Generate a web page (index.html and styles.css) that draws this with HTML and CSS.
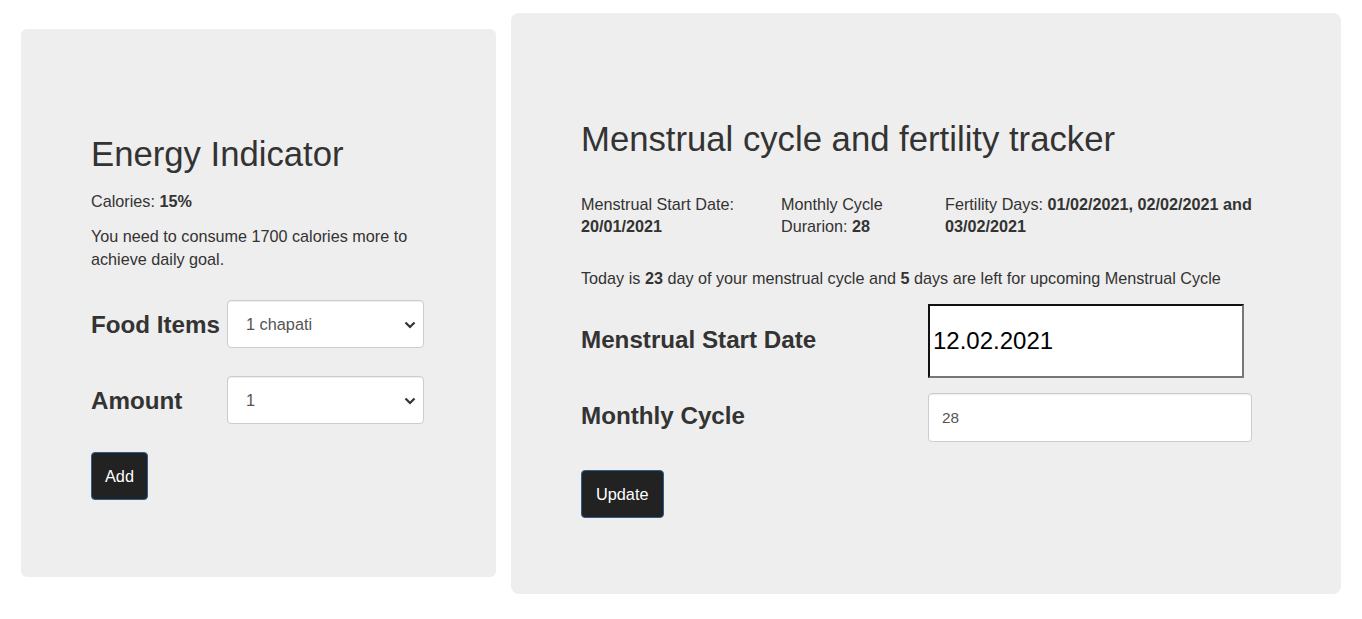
FILE: index.html
```html
<!DOCTYPE html>
<html lang="en">
<head>
<meta charset="utf-8">
<title>Energy Indicator &amp; Cycle Tracker</title>
<link rel="stylesheet" href="styles.css">
</head>
<body>
<div class="page">
  <section class="panel panel-energy">
    <h2 class="title">Energy Indicator</h2>
    <p class="text calories">Calories: <b>15%</b></p>
    <p class="text need">You need to consume 1700 calories more to achieve daily goal.</p>
    <div class="form-row energy-row first-row">
      <label class="label">Food Items</label>
      <div class="select-wrap">
        <select class="select"><option>1 chapati</option></select>
        <svg class="chev" width="12" height="8" viewBox="0 0 12 8"><path d="M1.5 1.5 L6 6 L10.5 1.5" fill="none" stroke="#333" stroke-width="2.2"/></svg>
      </div>
    </div>
    <div class="form-row energy-row">
      <label class="label">Amount</label>
      <div class="select-wrap">
        <select class="select"><option>1</option></select>
        <svg class="chev" width="12" height="8" viewBox="0 0 12 8"><path d="M1.5 1.5 L6 6 L10.5 1.5" fill="none" stroke="#333" stroke-width="2.2"/></svg>
      </div>
    </div>
    <button class="btn btn-add">Add</button>
  </section>

  <section class="panel panel-cycle">
    <h2 class="title">Menstrual cycle and fertility tracker</h2>
    <div class="info">
      <div class="text info-col">Menstrual Start Date: <b>20/01/2021</b></div>
      <div class="text info-col">Monthly Cycle Durarion: <b>28</b></div>
      <div class="text info-col info-last">Fertility Days: <b>01/02/2021, 02/02/2021 and 03/02/2021</b></div>
    </div>
    <p class="text today">Today is <b>23</b> day of your menstrual cycle and <b>5</b> days are left for upcoming Menstrual Cycle</p>
    <div class="form-row cycle-row">
      <label class="label">Menstrual Start Date</label>
      <input class="date-input" type="text" value="12.02.2021">
    </div>
    <div class="form-row cycle-row row-gap">
      <label class="label">Monthly Cycle</label>
      <input class="num-input" type="text" value="28">
    </div>
    <button class="btn btn-update">Update</button>
  </section>
</div>
</body>
</html>
```

FILE: styles.css
```css
html, body {
  margin: 0;
  padding: 0;
  background: #ffffff;
}

body {
  font-family: "Liberation Sans", Arial, sans-serif;
  color: #333333;
}

.page {
  display: flex;
  align-items: flex-start;
  gap: 15px;
  padding: 13px 21px 0 21px;
}

.panel {
  background: #eeeeee;
  box-sizing: border-box;
}

.panel-energy {
  width: 475px;
  margin-top: 16px;
  border-radius: 6px;
  padding: 102px 72px 77px 70px;
}

.panel-cycle {
  width: 830px;
  border-radius: 8px;
  padding: 103px 70px 76px 70px;
}

.title {
  margin: 0;
  font-weight: 400;
  font-size: 34.7px;
  line-height: 46px;
  color: #333333;
  white-space: nowrap;
}

.text {
  font-size: 16.2px;
  line-height: 23px;
  margin: 0;
}

.text b {
  font-weight: 700;
}

.calories {
  margin-top: 13px;
}

.need {
  margin-top: 12px;
}

.form-row {
  display: grid;
  align-items: center;
}

.energy-row {
  grid-template-columns: 136px 197px;
  margin-top: 28px;
}

.energy-row.first-row {
  margin-top: 29px;
}

.label {
  font-weight: 700;
  font-size: 24.2px;
  line-height: 33px;
  color: #333333;
  white-space: nowrap;
}

.cycle-row .label {
  margin-top: -4px;
}

.select-wrap {
  position: relative;
  height: 48px;
}

.select {
  appearance: none;
  -webkit-appearance: none;
  width: 100%;
  height: 48px;
  box-sizing: border-box;
  background: #ffffff;
  border: 1px solid #cccccc;
  border-radius: 4px;
  box-shadow: inset 0 1px 1px rgba(0, 0, 0, 0.075);
  padding: 0 0 0 18px;
  font-family: inherit;
  font-size: 16.3px;
  color: #555555;
}

.chev {
  position: absolute;
  right: 8px;
  top: 21px;
  pointer-events: none;
}

.btn {
  display: block;
  height: 48px;
  box-sizing: border-box;
  background: #222222;
  color: #ffffff;
  border: 1px solid #2d5d8f;
  border-radius: 4px;
  font-family: inherit;
  font-size: 16.3px;
  padding: 0 13px;
  margin-top: 28px;
}

.btn-update {
  padding: 0 14px;
}

.info {
  display: grid;
  grid-template-columns: 200px 164px 1fr;
  margin-top: 31px;
}

.info-col {
  line-height: 22px;
  padding-right: 12px;
}

.info-col.info-last {
  padding-right: 0;
}

.today {
  margin-top: 30px;
  line-height: 22px;
}

.cycle-row {
  grid-template-columns: 347px 324px;
  margin-top: 15px;
}

.cycle-row.row-gap {
  margin-top: 15px;
}

.date-input {
  width: 316px;
  height: 74px;
  box-sizing: border-box;
  background: #ffffff;
  border-style: solid;
  border-width: 2px;
  border-color: #111111 #777777 #777777 #111111;
  padding: 0 0 0 3px;
  font-family: inherit;
  font-size: 24px;
  color: #000000;
}

.num-input {
  width: 324px;
  height: 49px;
  box-sizing: border-box;
  background: #ffffff;
  border: 1px solid #cccccc;
  border-radius: 4px;
  box-shadow: inset 0 1px 1px rgba(0, 0, 0, 0.075);
  padding: 0 0 0 13px;
  font-family: inherit;
  font-size: 15.3px;
  color: #555555;
}
```
